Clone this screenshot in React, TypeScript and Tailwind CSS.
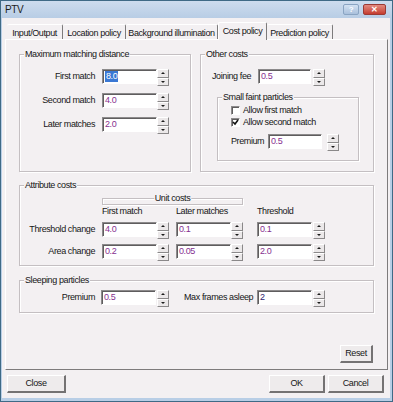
// Boîte de dialogue PTV — onglet "Cost policy", style Windows classique
import React from 'react'

type Children = { children?: React.ReactNode }

// Demi-bouton du spinner (haut / bas)
function SpinHalf({ up }: { up?: boolean }) {
  return (
    <div className="flex w-full flex-1 items-center justify-center border border-t-white border-l-white border-r-[#8a8889] border-b-[#8a8889] bg-[#ebe8e9]">
      <div
        className={
          up
            ? 'h-0 w-0 border-x-[2px] border-b-[2px] border-x-transparent border-b-[#1c1c1c]'
            : 'h-0 w-0 border-x-[2px] border-t-[2px] border-x-transparent border-t-[#1c1c1c]'
        }
      />
    </div>
  )
}

function Spin({ className = '' }: { className?: string }) {
  return (
    <div className={`flex h-[17px] w-[12px] flex-col ${className}`}>
      <SpinHalf up />
      <SpinHalf />
    </div>
  )
}

// Champ de saisie enfoncé
function Field({
  value,
  className = 'w-[55px]',
  selected,
  color = 'text-[#86308f]',
}: {
  value: string
  className?: string
  selected?: boolean
  color?: string
}) {
  return (
    <div
      className={`flex h-[15px] items-center border border-t-[#8c8a8b] border-l-[#8c8a8b] border-b-white border-r-white bg-white pl-[2px] shadow-[inset_1px_1px_0_#5f5d5e] ${className}`}
    >
      <span className={selected ? 'bg-[#3b78d4] px-[1px] leading-[11px] text-white' : `leading-[11px] ${color}`}>
        {value}
      </span>
    </div>
  )
}

// Cadre de groupe avec titre sur la bordure
function Group({ title, className = '', children }: Children & { title: string; className?: string }) {
  return (
    <div className={`relative border border-[#c4bfc2] shadow-[inset_1px_1px_0_#ffffff,1px_1px_0_#ffffff] ${className}`}>
      <span className="absolute -top-[6px] left-[4px] bg-[#f3f0f2] px-[1px] leading-[11px]">{title}</span>
      {children}
    </div>
  )
}

function Check({ checked, label }: { checked?: boolean; label: string }) {
  return (
    <div className="flex h-[9px] items-center">
      <div className="flex h-[9px] w-[9px] items-center justify-center border border-t-[#8c8a8b] border-l-[#8c8a8b] border-b-white border-r-white bg-white shadow-[inset_1px_1px_0_#5f5d5e]">
        {checked && (
          <svg width="7" height="7" viewBox="0 0 7 7">
            <polyline points="1,3 3,5 6,1" fill="none" stroke="#111" strokeWidth="1.6" />
          </svg>
        )}
      </div>
      <span className="ml-[3px] leading-[11px]">{label}</span>
    </div>
  )
}

function Button({ label, className = '' }: { label: string; className?: string }) {
  return (
    <div
      className={`flex h-[18px] items-center justify-center border border-t-white border-l-white border-r-[2px] border-b-[2px] border-r-[#747273] border-b-[#747273] bg-[#eeebec] leading-[11px] ${className}`}
    >
      {label}
    </div>
  )
}

const TABS = [
  { label: 'Input/Output', w: 'w-[56px]' },
  { label: 'Location policy', w: 'w-[63px]' },
  { label: 'Background illumination', w: 'w-[92px]' },
  { label: 'Cost policy', w: 'w-[49px]', active: true },
  { label: 'Prediction policy', w: 'w-[66px]' },
]

export default function App() {
  return (
    <div className="flex h-[402px] w-[393px] flex-col border border-[#3f6a86] bg-[#b8cee6] font-['Liberation_Sans',Arial,sans-serif] text-[9px] tracking-[-0.4px] text-[#161616]">
      {/* Barre de titre */}
      <div className="flex h-[17px] items-center bg-gradient-to-b from-[#cddcee] to-[#b8cde5] pl-[4px]">
        <span className="text-[10px] leading-[12px] text-[#1b1b1b]">PTV</span>
        <div className="ml-auto flex items-center gap-[4px] pr-[6px]">
          <div className="flex h-[11px] w-[16px] items-center justify-center rounded-[2px] border border-[#8aa4c2] bg-gradient-to-b from-[#d4e2f2] to-[#a9c0dc] text-[8px] font-bold leading-[9px] text-white">
            ?
          </div>
          <div className="flex h-[11px] w-[23px] items-center justify-center rounded-[2px] border border-[#9b3a34] bg-gradient-to-b from-[#e2897f] to-[#c43b2f] text-[8px] font-bold leading-[9px] text-white">
            ✕
          </div>
        </div>
      </div>

      {/* Zone cliente */}
      <div className="ml-[1px] flex h-[380px] w-[388px] flex-col bg-[#f3f0f2]">
        {/* Onglets */}
        <div className="flex h-[21px] items-end pl-[5px]">
          {TABS.map(t =>
            t.active ? (
              <div
                key={t.label}
                className={`relative z-10 -mb-[1px] flex h-[18px] items-start justify-center rounded-t-[2px] border-t border-l border-r border-t-white border-l-white border-r-[#7d7b7c] bg-[#f3f0f2] pt-[3px] leading-[11px] ${t.w}`}
              >
                {t.label}
              </div>
            ) : (
              <div
                key={t.label}
                className={`flex h-[15px] items-start justify-center rounded-t-[2px] border-t border-r border-t-white border-r-[#7d7b7c] pt-[3px] leading-[11px] ${t.w}`}
              >
                {t.label}
              </div>
            )
          )}
        </div>

        {/* Panneau de l'onglet */}
        <div className="ml-[3px] flex h-[331px] w-[383px] flex-col border border-t-white border-l-white border-r-[#7d7b7c] border-b-[#7d7b7c] pl-[13px]">
          {/* Ligne du haut : deux groupes */}
          <div className="mt-[14px] flex gap-[9px]">
            <Group title="Maximum matching distance" className="h-[118px] w-[172px]">
              <div className="flex flex-col gap-[7px] pt-[14px]">
                {[
                  { label: 'First match', value: '8.0', selected: true },
                  { label: 'Second match', value: '4.0' },
                  { label: 'Later matches', value: '2.0' },
                ].map(r => (
                  <div key={r.label} className="flex h-[17px] items-start">
                    <span className="w-[75px] text-right leading-[14px]">{r.label}</span>
                    <Field value={r.value} selected={r.selected} className="ml-[7px] w-[55px]" />
                    <Spin />
                  </div>
                ))}
              </div>
            </Group>

            <Group title="Other costs" className="h-[118px] w-[174px]">
              <div className="flex h-[17px] items-start pl-[11px] pt-0 mt-[14px]">
                <span className="w-[46px] leading-[14px]">Joining fee</span>
                <Field value="0.5" className="w-[53px]" />
                <Spin className="ml-[2px]" />
              </div>

              <Group title="Small faint particles" className="ml-[16px] mt-[11px] h-[64px] w-[142px]">
                <div className="flex flex-col gap-[3px] pl-[13px] pt-[8px]">
                  <Check label="Allow first match" />
                  <Check label="Allow second match" checked />
                </div>
                <div className="mt-[7px] flex h-[17px] items-start pl-[13px]">
                  <span className="w-[37px] leading-[14px]">Premium</span>
                  <Field value="0.5" className="w-[54px]" />
                  <Spin className="ml-[5px]" />
                </div>
              </Group>
            </Group>
          </div>

          {/* Coûts des attributs */}
          <Group title="Attribute costs" className="mt-[13px] h-[81px] w-[355px]">
            <div className="relative ml-[82px] mt-[12px] h-[7px] w-[141px] border border-[#c4bfc2] shadow-[inset_1px_1px_0_#ffffff,1px_1px_0_#ffffff]">
              <span className="absolute -top-[6px] left-1/2 -translate-x-1/2 bg-[#f3f0f2] px-[1px] leading-[11px]">
                Unit costs
              </span>
            </div>
            <div className="ml-[82px] mt-[1px] flex leading-[11px]">
              <span className="w-[74px]">First match</span>
              <span className="w-[81px]">Later matches</span>
              <span>Threshold</span>
            </div>
            {[
              { label: 'Threshold change', v: ['4.0', '0.1', '0.1'] },
              { label: 'Area change', v: ['0.2', '0.05', '2.0'] },
            ].map(r => (
              <div key={r.label} className="mt-[5px] flex h-[17px] items-start">
                <span className="w-[75px] text-right leading-[14px]">{r.label}</span>
                <Field value={r.v[0]} className="ml-[7px] w-[55px]" />
                <Spin />
                <Field value={r.v[1]} className="ml-[7px] w-[55px]" />
                <Spin />
                <Field value={r.v[2]} className="ml-[14px] w-[55px]" />
                <Spin className="ml-[1px]" />
              </div>
            ))}
          </Group>

          {/* Particules endormies */}
          <Group title="Sleeping particles" className="mt-[14px] h-[33px] w-[355px]">
            <div className="mt-[9px] flex h-[17px] items-start">
              <span className="w-[75px] text-right leading-[14px]">Premium</span>
              <Field value="0.5" className="ml-[6px] w-[55px]" />
              <Spin className="ml-[1px]" />
              <span className="ml-[15px] w-[73px] leading-[14px]">Max frames asleep</span>
              <Field value="2" className="w-[55px]" color="text-[#2e2370]" />
              <Spin className="ml-[1px]" />
            </div>
          </Group>

          <div className="mt-[32px] flex justify-end pr-[14px]">
            <Button label="Reset" className="w-[33px]" />
          </div>
        </div>

        {/* Boutons du bas */}
        <div className="mt-[5px] flex">
          <Button label="Close" className="ml-[5px] w-[59px]" />
          <Button label="OK" className="ml-auto w-[56px]" />
          <Button label="Cancel" className="ml-[3px] mr-[6px] w-[56px]" />
        </div>
      </div>
    </div>
  )
}
